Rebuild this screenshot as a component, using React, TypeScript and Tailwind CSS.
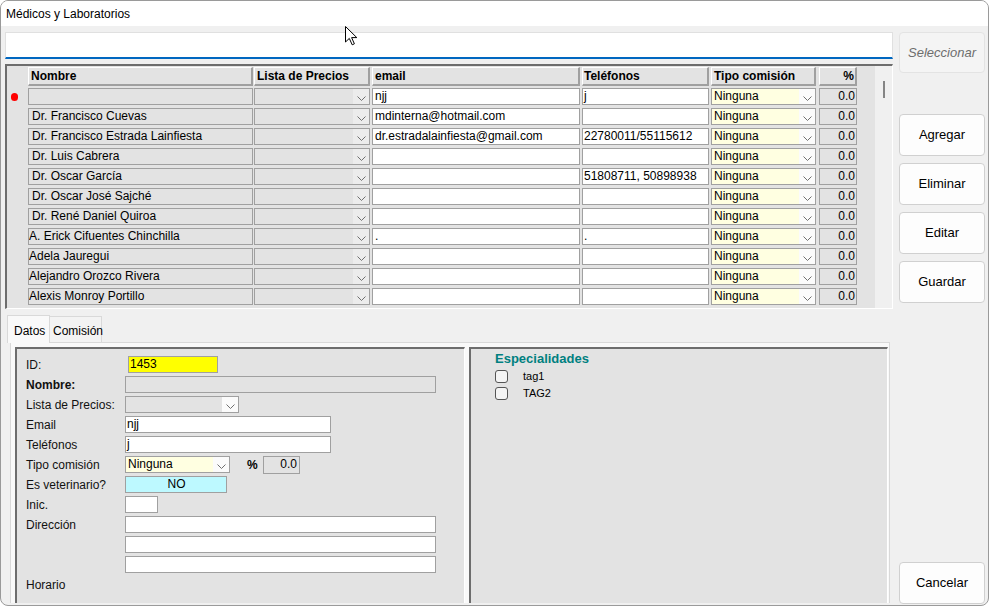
import React from 'react';

type Row = { name: string; lead?: boolean; email?: string; tel?: string; current?: boolean };

const rows: Row[] = [
    { name: '', email: 'njj', tel: 'j', current: true },
    { name: 'Dr. Francisco Cuevas', lead: true, email: 'mdinterna@hotmail.com' },
    { name: 'Dr. Francisco Estrada Lainfiesta', lead: true, email: 'dr.estradalainfiesta@gmail.com', tel: '22780011/55115612' },
    { name: 'Dr. Luis Cabrera', lead: true },
    { name: 'Dr. Oscar García', lead: true, tel: '51808711, 50898938' },
    { name: 'Dr. Oscar José Sajché', lead: true },
    { name: 'Dr. René Daniel Quiroa', lead: true },
    { name: 'A. Erick Cifuentes Chinchilla', email: '.', tel: '.' },
    { name: 'Adela Jauregui' },
    { name: 'Alejandro Orozco Rivera' },
    { name: 'Alexis Monroy Portillo' },
];

const Chevron = () => (
    <svg width="9" height="5" viewBox="0 0 9 5" className="block">
        <polyline points="0.5,0.5 4.5,4.5 8.5,0.5" fill="none" stroke="#707070" strokeWidth="1" />
    </svg>
);

const DropBtn = ({ light }: { light?: boolean }) => (
    <div className={`w-[16px] h-full flex items-center justify-center pt-[3px] ${light ? 'bg-[#fbfbfb]' : 'bg-[#ececec]'}`}>
        <Chevron />
    </div>
);

const headCell = 'h-[19px] bg-[#e3e3e3] border-t border-l border-white border-r-2 border-b-2 border-r-[#a0a0a0] border-b-[#a0a0a0] font-bold text-[12px] leading-[16px] whitespace-nowrap overflow-hidden';
const cell = 'h-[17px] border border-[#a0a0a0] text-[12px] leading-[15px] whitespace-nowrap overflow-hidden';

const GridRow = ({ r }: { r: Row }) => (
    <div className="flex">
        <div className="w-[21px] flex items-center pl-[4px]">
            {r.current && <div className="w-[7px] h-[8px] rounded-full bg-[#ff0000]" />}
        </div>
        <div className={`${cell} w-[225px] bg-[#e3e3e3] ${r.lead ? 'pl-[3px]' : 'pl-0'}`}>{r.name}</div>
        <div className={`${cell} w-[116px] ml-[1px] bg-[#e3e3e3] flex justify-end`}>
            <DropBtn />
        </div>
        <div className={`${cell} w-[208px] ml-[2px] bg-white pl-[2px]`}>{r.email ?? ''}</div>
        <div className={`${cell} w-[127px] ml-[2px] bg-white pl-[1px]`}>{r.tel ?? ''}</div>
        <div className={`${cell} w-[105px] ml-[2px] bg-[#ffffe1] flex justify-between`}>
            <span className="pl-[2px]">Ninguna</span>
            <DropBtn light />
        </div>
        <div className={`${cell} w-[38px] ml-[3px] bg-[#e3e3e3] text-right pr-[1px]`}>0.0</div>
    </div>
);

const SideButton = ({ label, className = '' }: { label: string; className?: string }) => (
    <div className={`h-[42px] rounded-[4px] border border-[#d0d0d0] bg-[#fdfdfd] flex items-center justify-center text-[13px] text-black ${className}`}>
        {label}
    </div>
);

const Field = ({ label, bold, children }: { label: string; bold?: boolean; children?: React.ReactNode }) => (
    <div className="flex h-[17px] items-center">
        <div className={`w-[99px] shrink-0 text-[12px] text-[#111] ${bold ? 'font-semibold' : ''}`}>{label}</div>
        <div className="flex items-center h-full">{children}</div>
    </div>
);

const input = 'h-[17px] border border-[#a0a0a0] text-[12px] leading-[15px] pl-[1px]';

const App = () => {
    return (
        <div className="w-[992px] h-[609px] bg-white relative overflow-hidden" style={{ fontFamily: '"Liberation Sans", Arial, sans-serif' }}>
            <div className="absolute left-[897px] top-0 w-[50px] h-[2px] bg-[#2b3fb8]" />
            <div className="w-[989px] h-[606px] border border-[#9a9a9a] rounded-[8px] overflow-hidden flex flex-col bg-[#f0f0f0] relative">
                {/* title bar */}
                <div className="h-[25px] bg-white flex items-center pl-[5px] text-[12px] text-black shrink-0">
                    Médicos y Laboratorios
                </div>

                <div className="flex flex-1 pt-[6px] min-h-0">
                    {/* left column */}
                    <div className="ml-[4px] w-[888px] flex flex-col">
                        <div className="h-[27px] bg-white border-t border-x border-[#e0e0e0] border-b-2 border-b-[#0067c0]" />

                        {/* grid */}
                        <div className="mt-[5px] h-[245px] flex border-t-2 border-l-2 border-[#6d6d6d] border-r border-b border-r-white border-b-white">
                            <div className="w-[868px] bg-[#e3e3e3] pt-[1px]">
                                <div className="flex">
                                    <div className="w-[21px]" />
                                    <div className={`${headCell} w-[225px] pl-[2px]`}>Nombre</div>
                                    <div className={`${headCell} w-[116px] ml-[1px] pl-[2px]`}>Lista de Precios</div>
                                    <div className={`${headCell} w-[208px] ml-[2px] pl-[2px]`}>email</div>
                                    <div className={`${headCell} w-[127px] ml-[2px] pl-[1px]`}>Teléfonos</div>
                                    <div className={`${headCell} w-[105px] ml-[2px] pl-[2px]`}>Tipo comisión</div>
                                    <div className={`${headCell} w-[38px] ml-[3px] text-right pr-[1px]`}>%</div>
                                </div>
                                <div className="mt-[2px] flex flex-col gap-[3px]">
                                    {rows.map((r, i) => (
                                        <GridRow key={i} r={r} />
                                    ))}
                                </div>
                            </div>
                            <div className="w-[17px] bg-[#f0f0f0] pt-[15px] pl-[8px]">
                                <div className="w-[2px] h-[17px] bg-[#858585]" />
                            </div>
                        </div>

                        {/* tabs */}
                        <div className="mt-[5px] flex items-end h-[28px] pl-[2px]">
                            <div className="w-[43px] h-[28px] bg-[#f9f9f9] border-t border-x border-[#d9d9d9] text-[12px] pl-[6px] pt-[6px] relative z-10 -mb-[1px]">
                                Datos
                            </div>
                            <div className="w-[52px] h-[26px] bg-[#f3f3f3] border-t border-r border-[#d9d9d9] text-[12px] pl-[3px] pt-[5px]">
                                Comisión
                            </div>
                        </div>
                        <div className="ml-[5px] w-[880px] flex-1 mb-[2px] bg-[#f9f9f9] border border-[#d9d9d9] border-b-0 pt-[4px] pl-[4px] pr-[1px] flex gap-[4px]">
                            {/* left box */}
                            <div className="w-[450px] h-full bg-[#e3e3e3] border-t-2 border-l-2 border-[#6d6d6d] border-r border-r-white pt-[7px] pl-[9px] flex flex-col gap-[3px]">
                                <Field label="ID:">
                                    <div className={`${input} w-[90px] ml-[3px] bg-[#ffff00]`}>1453</div>
                                </Field>
                                <Field label="Nombre:" bold>
                                    <div className={`${input} w-[311px] bg-[#e3e3e3]`} />
                                </Field>
                                <Field label="Lista de Precios:">
                                    <div className={`${input} w-[114px] bg-[#e3e3e3] flex justify-end pl-0`}>
                                        <DropBtn light />
                                    </div>
                                </Field>
                                <Field label="Email">
                                    <div className={`${input} w-[206px] bg-white`}>njj</div>
                                </Field>
                                <Field label="Teléfonos">
                                    <div className={`${input} w-[206px] bg-white`}>j</div>
                                </Field>
                                <Field label="Tipo comisión">
                                    <div className={`${input} w-[105px] bg-[#ffffe1] flex justify-between pl-[2px]`}>
                                        <span>Ninguna</span>
                                        <DropBtn light />
                                    </div>
                                    <span className="ml-[17px] w-[16px] text-[12px] font-bold">%</span>
                                    <div className={`${input} h-[18px] w-[37px] bg-[#e3e3e3] text-right pr-[2px] leading-[13px]`}>0.0</div>
                                </Field>
                                <Field label="Es veterinario?">
                                    <div className={`${input} w-[102px] bg-[#bdf9ff] text-center`}>NO</div>
                                </Field>
                                <Field label="Inic.">
                                    <div className={`${input} w-[33px] bg-white`} />
                                </Field>
                                <Field label="Dirección">
                                    <div className={`${input} w-[311px] bg-white`} />
                                </Field>
                                <Field label="">
                                    <div className={`${input} w-[311px] bg-white`} />
                                </Field>
                                <Field label="">
                                    <div className={`${input} w-[311px] bg-white`} />
                                </Field>
                                <Field label="Horario" />
                            </div>

                            {/* right box */}
                            <div className="flex-1 h-full bg-[#e3e3e3] border-t-2 border-l-2 border-[#6d6d6d] border-r border-r-white pl-[24px] pt-[1px]">
                                <div className="text-[13px] font-bold text-[#008080] leading-[17px]">Especialidades</div>
                                <div className="flex flex-col gap-[4px] mt-[3px]">
                                    {['tag1', 'TAG2'].map(t => (
                                        <div key={t} className="flex items-center h-[13px]">
                                            <div className="w-[13px] h-[13px] rounded-[3px] border border-[#555] bg-[#f4f4f4]" />
                                            <span className="ml-[15px] text-[11px] text-black">{t}</span>
                                        </div>
                                    ))}
                                </div>
                            </div>
                        </div>
                    </div>

                    {/* right buttons */}
                    <div className="ml-[6px] w-[86px] flex flex-col">
                        <div className="h-[41px] rounded-[4px] border border-[#e3e3e3] bg-[#f4f4f4] flex items-center justify-center text-[13px] italic text-[#6d6d6d]">
                            Seleccionar
                        </div>
                        <SideButton label="Agregar" className="mt-[41px]" />
                        <SideButton label="Eliminar" className="mt-[7px]" />
                        <SideButton label="Editar" className="mt-[7px]" />
                        <SideButton label="Guardar" className="mt-[7px]" />
                        <SideButton label="Cancelar" className="mt-auto mb-[1px]" />
                    </div>
                </div>

                {/* mouse cursor */}
                <svg className="absolute left-[344px] top-[25px]" width="13" height="20" viewBox="0 0 13 20">
                    <path d="M0.5 0.5 L0.5 16 L4.3 12.4 L7.2 18.8 L9.4 17.8 L6.6 11.6 L11.8 11.6 Z" fill="white" stroke="black" strokeWidth="1" strokeLinejoin="round" />
                </svg>
            </div>
        </div>
    );
};

export default App;
